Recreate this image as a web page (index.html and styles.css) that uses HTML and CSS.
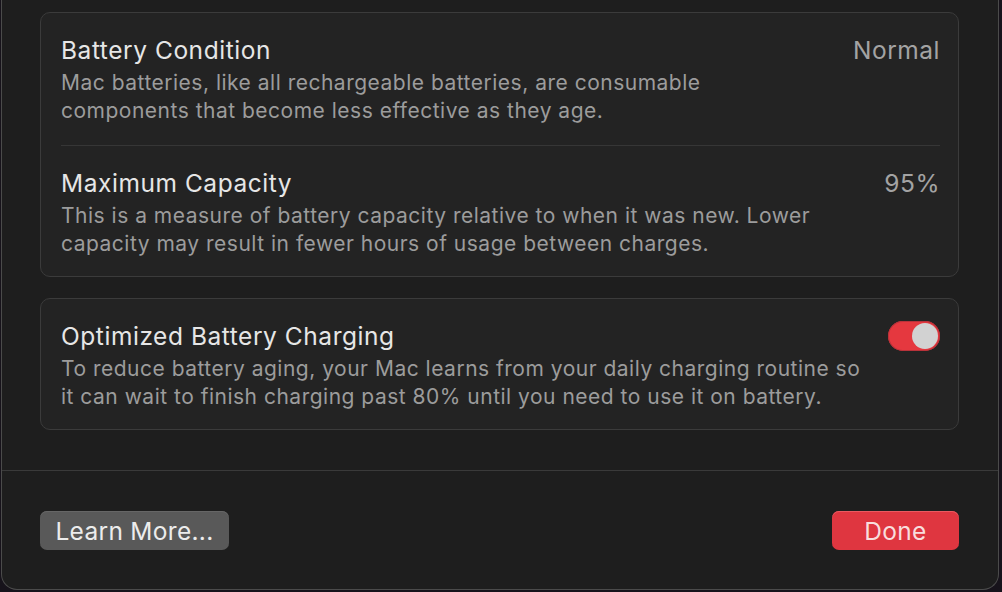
FILE: index.html
```html
<!DOCTYPE html>
<html>
<head>
<meta charset="utf-8">
<link rel="stylesheet" href="styles.css">
</head>
<body>
<div class="window">
  <div class="content">
    <section class="card">
      <div class="row">
        <div class="text">
          <div class="title">Battery Condition</div>
          <div class="desc">Mac batteries, like all rechargeable batteries, are consumable<br>components that become less effective as they age.</div>
        </div>
        <div class="value">Normal</div>
      </div>
      <div class="sep"></div>
      <div class="row">
        <div class="text">
          <div class="title">Maximum Capacity</div>
          <div class="desc">This is a measure of battery capacity relative to when it was new. Lower<br>capacity may result in fewer hours of usage between charges.</div>
        </div>
        <div class="value">95%</div>
      </div>
    </section>
    <section class="card">
      <div class="row">
        <div class="text">
          <div class="title">Optimized Battery Charging</div>
          <div class="desc">To reduce battery aging, your Mac learns from your daily charging routine so<br>it can wait to finish charging past 80% until you need to use it on battery.</div>
        </div>
        <div class="toggle"><div class="knob"></div></div>
      </div>
    </section>
  </div>
  <div class="footer">
    <button class="btn secondary">Learn More...</button>
    <button class="btn primary">Done</button>
  </div>
</div>
</body>
</html>
```
FILE: styles.css
```css
html, body {
  margin: 0;
  padding: 0;
  background: #17131b;
  height: 592px;
  overflow: hidden;
  font-family: Inter, "Noto Sans", "Liberation Sans", sans-serif;
}
.window {
  margin-left: 1px;
  width: 996px;
  height: 589px;
  background: #1e1e1e;
  border: 1px solid #4b4b4b;
  border-top: none;
  border-radius: 0 0 16px 16px;
  display: flex;
  flex-direction: column;
}
.content {
  padding: 12px 39px 0 38px;
  display: flex;
  flex-direction: column;
  gap: 21px;
  height: 471px;
  box-sizing: border-box;
  border-bottom: 1px solid #3a3a3a;
}
.card {
  background: #232323;
  border: 1px solid #3b3b3b;
  border-radius: 10px;
  padding: 0 18px 0 20px;
}
.row {
  display: flex;
  justify-content: space-between;
  align-items: flex-start;
  padding: 21px 0 20px;
}
.row:last-child {
  padding-bottom: 18px;
}
.title {
  color: #e6e6e6;
  font-size: 24.5px;
  line-height: 32px;
  letter-spacing: 0.55px;
}
.desc {
  margin-top: 3px;
  color: #9c9c9c;
  font-size: 21px;
  line-height: 28px;
  letter-spacing: 0.5px;
}
.value {
  color: #a3a3a3;
  font-size: 24.5px;
  line-height: 32px;
  letter-spacing: 0.5px;
}
.sep {
  height: 1px;
  background: #363636;
}
.toggle {
  width: 52px;
  height: 30px;
  margin-top: 1px;
  border-radius: 15px;
  background: #e5383f;
  box-shadow: inset 0 0 0 1px #b8323a;
  position: relative;
  flex: none;
}
.knob {
  position: absolute;
  right: 2px;
  top: 2px;
  width: 26px;
  height: 26px;
  border-radius: 50%;
  background: #d2d2d2;
}
.footer {
  display: flex;
  justify-content: space-between;
  padding: 40px 39px 0 38px;
}
.btn {
  font-family: inherit;
  border: none;
  height: 39px;
  border-radius: 7px;
  font-size: 24.5px;
  letter-spacing: 0.3px;
  padding: 0;
  color: #ececec;
}
.secondary {
  width: 189px;
  background: #595959;
  box-shadow: inset 0 1px 0 #666;
}
.primary {
  width: 127px;
  background: #df3640;
  color: #f8dede;
  box-shadow: inset 0 1px 0 #ea5a61;
}
```
